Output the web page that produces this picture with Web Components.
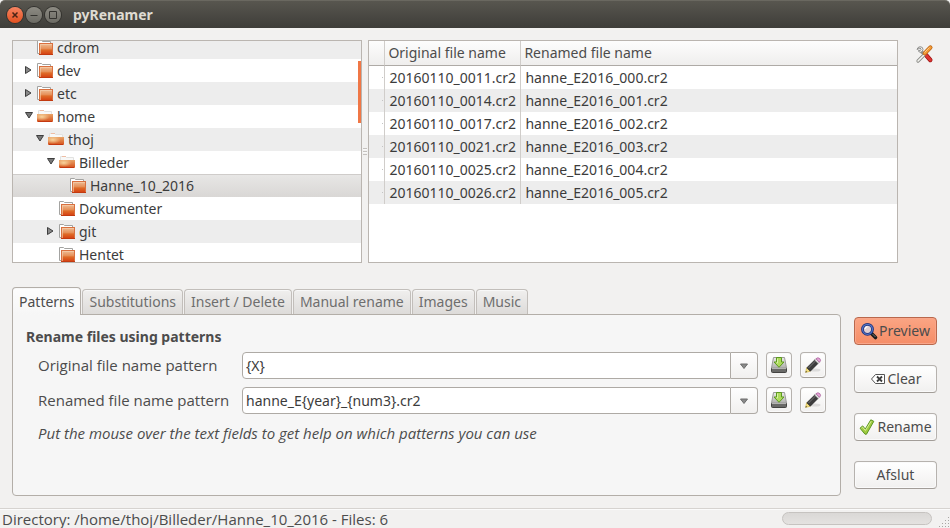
<!DOCTYPE html>
<html lang="da">
<head>
  <meta charset="utf-8">
  <title>pyRenamer</title>
  <style>
    body {
      margin: 0;
      background: #f2f1f0;
      color: #4c4c4c;
      font: 14px/20px "Noto Sans", "Open Sans", sans-serif;
    }
  </style>
</head>
<body>
  <renamer-app></renamer-app>

<script>
(function () {
  // 16x16 drawings used by <app-icon>
  const icons = {
    folder: `
      <linearGradient id="g" x1="0" y1="0" x2="0" y2="1"><stop offset="0" stop-color="#eebb92"/><stop offset=".45" stop-color="#e6915a"/><stop offset=".6" stop-color="#df6c28"/><stop offset="1" stop-color="#d64414"/></linearGradient>
      <path d="M2 13.500H.5V.5h4l1 1h8V3" fill="#fff" stroke="#a3a3a1"/>
      <path d="M2 3h14v12H2z" fill="#d9703f"/>
      <rect x="3" y="4" width="12" height="10" fill="url(#g)"/>
      <path d="M3.500 14V4.500H15" stroke="#f5d2b2" stroke-opacity=".6"/>
      <path d="M2 14.500h14" stroke="#c23a10"/>`,
    'folder-open': `
      <linearGradient id="g" x1="0" y1="0" x2="0" y2="1"><stop offset="0" stop-color="#e9a468"/><stop offset="1" stop-color="#d5501a"/></linearGradient>
      <radialGradient id="l" cx=".3" cy=".35" r=".5"><stop offset="0" stop-color="#f8d49c"/><stop offset="1" stop-color="#f8d49c" stop-opacity="0"/></radialGradient>
      <path d="M1.500 5V1.500h5l1 1h7V5" fill="#f8f8f7" stroke="#e2e2e0"/>
      <path d="M3 1.500h4" stroke="#eebda4"/>
      <path d="M0 5h16v7q0 1-1 1H1q-1 0-1-1z" fill="url(#g)"/>
      <path d="M0 5h16v7q0 1-1 1H1q-1 0-1-1z" fill="url(#l)"/>
      <path d="M1 12.500h14" stroke="#c43810"/>`,
    tools: `
      <path d="M5 5.500l5 4" stroke="#8f8f8c" stroke-width="3"/>
      <path d="M10 9l4.300 5" stroke="#9c1414" stroke-width="4.400" stroke-linecap="round"/>
      <path d="M10 9l4.300 5" stroke="#dd3532" stroke-width="3" stroke-linecap="round"/>
      <path d="M1 3.500Q1.500 1 4 .7q3 0 3 2.800-.2 2.600-2.500 2.800Q2 6 2.600 4.300l1.800.2.800-1.300-1.200-1.200z" fill="#f4f4f2" stroke="#858582" stroke-width=".9"/>
      <path d="M8 9l-6 6" stroke="#888884" stroke-width="3.200" stroke-linecap="round"/>
      <path d="M8 9l-6 6" stroke="#f4f4f0" stroke-width="1.600" stroke-linecap="round"/>
      <path d="M8.800 7.200L14.400 1.600" stroke="#b96314" stroke-width="4.200" stroke-linecap="round"/>
      <path d="M8.800 7.200L14.400 1.600" stroke="#f39a35" stroke-width="2.800" stroke-linecap="round"/>
      <path d="M8.500 6.500L13.500 1.500" stroke="#fbc98b"/>`,
    save: `
      <linearGradient id="g" x1="0" y1="0" x2="0" y2="1"><stop offset="0" stop-color="#ececea"/><stop offset="1" stop-color="#b0b0ae"/></linearGradient>
      <path d="M2.500.5h11l2 10.500H.5z" fill="url(#g)" stroke="#9a9a98"/>
      <path d="M.5 11.500h15v3q0 1-1 1h-13q-1 0-1-1z" fill="#6a6a68" stroke="#444442"/>
      <path d="M1 11.500h14" stroke="#b4b4b2"/>
      <path d="M5.500.5h5v4.500h2.500L8 10.300 3 5h2.500z" fill="#aedb5c" stroke="#5c9a1e"/>
      <path d="M6.500 1.500v4.500H5.500" fill="none" stroke="#d8f2a6"/>`,
    edit: `
      <ellipse cx="10" cy="13" rx="5.500" ry="1.500" fill="#000" fill-opacity=".1"/>
      <path d="M.6 15.400l1-4.600 3.600 3.500z" fill="#f4e082" stroke="#d0b448" stroke-width=".7"/>
      <path d="M.4 15.600l.6-1.600 1 1z" fill="#222"/>
      <path d="M1.800 10.800L9.700 3l3.400 3.400-7.800 7.800z" fill="#3c3c3c" stroke="#1d1d1d" stroke-width=".6"/>
      <path d="M3.500 11l7-7" stroke="#777"/>
      <path d="M9.700 3l1.200-1.200 3.400 3.400-1.200 1.200z" fill="#e4e4e4" stroke="#888" stroke-width=".5"/>
      <path d="M11 1.700q1.900-1.900 3.800-.1 1.700 1.900-.3 3.700z" fill="#e7a6da" stroke="#a05490" stroke-width=".7"/>`,
    find: `
      <path d="M10 10l4.500 4.500" stroke="#1b1b1b" stroke-width="3.600" stroke-linecap="round"/>
      <path d="M11.500 11l3 3" stroke="#777" stroke-width="1"/>
      <circle cx="6.500" cy="6.300" r="5" fill="#d8e2f2" fill-opacity=".75" stroke="#1d2f78" stroke-width="2.800"/>
      <circle cx="6.500" cy="6.300" r="5" fill="none" stroke="#5374c4" stroke-width="1.200"/>
      <path d="M4 5.800Q4.500 4 6.500 3.700" fill="none" stroke="#fff" stroke-width="1.300"/>`,
    clear: `
      <path d="M1.500 8l4-4.500h9v9h-9z" fill="#fff" stroke="#555"/>
      <path d="M7 5.500l5 5M12 5.500l-5 5" stroke="#3c3c3c" stroke-width="1.800"/>`,
    apply: `
      <path d="M1 9.200l2.700-2.300L6.300 10 11.800.8l3 1.500L7.500 15.200H6z" fill="#9fcb3f" stroke="#5c9626" stroke-linejoin="round"/>
      <path d="M2.600 9l1-.8 2.800 3.300 5.800-9.300" fill="none" stroke="#d5ee9a"/>`,
    right: '<path d="M4.500 3.500v7l5.500-3.500z" fill="#888" stroke="#3e3e3e"/>',
    down: '<path d="M4.500 3.500h7L8 9z" fill="#777" stroke="#3e3e3e"/>',
    arrow: '<path d="M4.500 6h7L8 10.500z" fill="#8a8a8a" stroke="#6c6c6c"/>',
    close: '<path d="M5.500 5.500l5 5M10.500 5.500l-5 5" stroke="#4a2416" stroke-width="1.500"/>',
    minimize: '<path d="M4.500 8.500h7" stroke="#34332f"/>',
    maximize: '<path d="M4.500 4.500h7v7h-7z" fill="none" stroke="#34332f"/>'
  }

  // defines an element whose shadow root is cloned from a template
  function define (name, html, setup) {
    const template = document.createElement('template')
    template.innerHTML = html
    window.customElements.define(name, class extends HTMLElement {
      constructor () {
        super()
        this.attachShadow({mode: 'open'})
        this.shadowRoot.appendChild(document.importNode(template.content, true))
      }

      connectedCallback () {
        if (setup) setup.call(this, this.shadowRoot)
      }
    })
  }

  define('app-icon', `<style>
      :host { display: block; flex: none; width: 16px; height: 16px; }
      svg { display: block; width: 100%; height: 100%; overflow: visible; }
    </style>
    <svg viewBox="0 0 16 16" fill="none" aria-hidden="true"></svg>
  `, function (root) {
    root.querySelector('svg').innerHTML = icons[this.getAttribute('name')]
  })

  define('push-button', `<style>
      :host { display: block; }
      button {
        display: flex;
        align-items: center;
        justify-content: center;
        gap: 2px;
        box-sizing: border-box;
        width: 100%;
        height: 28px;
        padding: 0;
        border: 1px solid #b6b2ae;
        border-bottom-color: #a29d98;
        border-radius: 4px;
        background: linear-gradient(#fff, #f1f0ef);
        box-shadow: inset 0 0 0 1px #fafafa;
        color: inherit;
        font: inherit;
        white-space: nowrap;
      }
      :host([square]) button { width: 26px; height: 26px; }
      :host([flat]) button { border: 0; background: none; box-shadow: none; }
      :host([primary]) button {
        border-color: #b9684c;
        background: linear-gradient(#fba584, #f58d67);
        box-shadow: inset 0 0 0 1px #f9a68a;
      }
    </style>
    <button type="button"><slot></slot></button>
  `, function (root) {
    const label = this.getAttribute('label')
    if (label) root.querySelector('button').setAttribute('aria-label', label)
  })

  define('title-bar', `<style>
      :host {
        display: flex;
        align-items: center;
        gap: 3px;
        box-sizing: border-box;
        height: 28px;
        padding: 0 7px;
        border-top: 1px solid #6a6860;
        border-radius: 5px 5px 0 0;
        background: linear-gradient(#58564f, #3e3d39);
      }
      button {
        display: block;
        box-sizing: border-box;
        width: 16px;
        height: 16px;
        padding: 0;
        border: 0;
        border-radius: 50%;
        background: linear-gradient(#8d8b83, #6c6b64);
        box-shadow: 0 0 0 1px #33322e;
      }
      .close { background: linear-gradient(#f78462, #e2501f); }
      h1 {
        margin: 0 0 0 9px;
        color: #dfdbd2;
        font-size: 14px;
        line-height: 20px;
      }
    </style>
    <button class="close" type="button" aria-label="Close"><app-icon name="close"></app-icon></button>
    <button type="button" aria-label="Minimize"><app-icon name="minimize"></app-icon></button>
    <button type="button" aria-label="Maximize"><app-icon name="maximize"></app-icon></button>
    <h1><slot></slot></h1>
  `)

  define('tree-row', `<style>
      :host {
        display: flex;
        align-items: center;
        box-sizing: border-box;
        height: 23px;
        padding-top: 1px;
        padding-left: calc(var(--depth) * 11px);
        color: #3c3c3c;
      }
      :host(:nth-child(odd)) { background: #ededed; }
      :host([aria-selected]) {
        box-shadow: inset 0 1px #cfccca;
        background: linear-gradient(#e8e7e6, #d9d7d5);
      }
      .expander { width: 13px; }
      .expander app-icon { margin-left: -3px; }
      .text { margin-left: 4px; }
    </style>
    <span class="expander"></span>
    <app-icon></app-icon>
    <span class="text"><slot></slot></span>
  `, function (root) {
    const state = this.getAttribute('aria-expanded')
    this.setAttribute('role', 'treeitem')
    this.style.setProperty('--depth', this.getAttribute('aria-level'))
    root.querySelector('app-icon').replaceWith(makeIcon(state === 'true' ? 'folder-open' : 'folder'))
    if (state) root.querySelector('.expander').replaceChildren(makeIcon(state === 'true' ? 'down' : 'right'))
  })

  function makeIcon (name) {
    const icon = document.createElement('app-icon')
    icon.setAttribute('name', name)
    return icon
  }

  define('folder-tree', `<style>
      :host {
        display: block;
        position: relative;
        box-sizing: border-box;
        overflow: hidden;
        border: 1px solid #bab5b0;
        background: #fff;
      }
      /* list is scrolled a little way down */
      .rows { margin-top: -5px; }
      .thumb {
        position: absolute;
        top: 20px;
        right: 0;
        width: 3px;
        height: 62px;
        background: #f07746;
      }
    </style>
    <div class="rows" role="tree" aria-label="Folders"><slot></slot></div>
    <div class="thumb"></div>
  `)

  define('file-list', `<style>
      :host {
        display: block;
        box-sizing: border-box;
        overflow: hidden;
        border: 1px solid #bab5b0;
        background: #fff;
      }
      table { width: 100%; border-collapse: separate; border-spacing: 0; table-layout: fixed; }
      .mark { width: 16px; }
      .original { width: 136px; }
      th, td {
        box-sizing: border-box;
        height: 23px;
        padding: 0 0 0 4px;
        border-right: 1px solid #d0cdca;
        text-align: left;
        white-space: nowrap;
      }
      th {
        height: 25px;
        padding-left: 3px;
        border-bottom: 1px solid #aeaaa6;
        background: linear-gradient(#fdfdfd, #efeeed);
        font-weight: normal;
      }
      th:last-child, td:last-child { border-right: 0; }
      td { color: #3c3c3c; }
      tbody tr:nth-child(even) { background: #ededed; }
      td:first-child::after {
        content: "";
        display: block;
        width: 1px;
        height: 1px;
        margin-left: 9px;
        background: #c4c4c4;
      }
    </style>
    <table>
      <colgroup><col class="mark"><col class="original"><col></colgroup>
      <thead><tr><th></th><th scope="col">Original file name</th><th scope="col">Renamed file name</th></tr></thead>
      <tbody>
        <tr><td></td><td>20160110_0011.cr2</td><td>hanne_E2016_000.cr2</td></tr>
        <tr><td></td><td>20160110_0014.cr2</td><td>hanne_E2016_001.cr2</td></tr>
        <tr><td></td><td>20160110_0017.cr2</td><td>hanne_E2016_002.cr2</td></tr>
        <tr><td></td><td>20160110_0021.cr2</td><td>hanne_E2016_003.cr2</td></tr>
        <tr><td></td><td>20160110_0025.cr2</td><td>hanne_E2016_004.cr2</td></tr>
        <tr><td></td><td>20160110_0026.cr2</td><td>hanne_E2016_005.cr2</td></tr>
      </tbody>
    </table>
  `)

  define('pane-handle', `<style>
      :host { display: flex; align-items: center; justify-content: center; width: 6px; }
      span {
        width: 4px;
        height: 7px;
        background: repeating-linear-gradient(#c4c1be 0 1px, #f9f9f9 1px 2px, transparent 2px 3px);
      }
    </style>
    <span></span>
  `)

  define('pattern-row', `<style>
      :host { display: flex; gap: 8px; }
      label {
        width: 196px;
        font: 15px/27px "Open Sans", sans-serif;
      }
      .combo { display: flex; flex: 1; }
      input, .combo button {
        box-sizing: border-box;
        height: 27px;
        border: 1px solid #aeaaa5;
        font: inherit;
      }
      input {
        flex: 1;
        min-width: 0;
        padding: 0 3px;
        border-radius: 4px 0 0 4px;
        background: #fff;
        color: #3c3c3c;
      }
      .combo button {
        display: flex;
        align-items: center;
        justify-content: center;
        width: 27px;
        padding: 1px 0 0;
        border-left: 0;
        border-radius: 0 4px 4px 0;
        background: linear-gradient(#fefefe, #f1f0ef);
      }
    </style>
    <label for="pattern"><slot></slot></label>
    <div class="combo">
      <input id="pattern" type="text" spellcheck="false">
      <button type="button" aria-label="Saved patterns"><app-icon name="arrow"></app-icon></button>
    </div>
    <push-button square label="Save pattern"><app-icon name="save"></app-icon></push-button>
    <push-button square label="Edit patterns"><app-icon name="edit"></app-icon></push-button>
  `, function (root) {
    root.querySelector('input').value = this.getAttribute('value')
    // text passed to the slot also names the field
    root.querySelector('input').setAttribute('aria-label', this.textContent)
  })

  define('rename-tabs', `<style>
      :host { display: flex; flex-direction: column; }
      .tabs { display: flex; align-items: flex-end; gap: 1px; height: 28px; }
      button {
        box-sizing: border-box;
        height: 26px;
        padding: 0 6px;
        border: 1px solid #c2beba;
        border-bottom-color: #b3aea8;
        border-radius: 4px 4px 0 0;
        background: linear-gradient(#f0efee, #dddbd9);
        box-shadow: inset 0 1px #f8f8f8;
        color: #6e6e6e;
        font: inherit;
        white-space: nowrap;
      }
      button[aria-selected=true] {
        position: relative;
        height: 28px;
        border-color: #b3aea8;
        border-bottom: 0;
        background: linear-gradient(#fdfdfd, #f6f6f6);
        color: #4c4c4c;
      }
      .page {
        flex: 1;
        margin-top: -1px;
        padding: 12px 14px 0 13px;
        border: 1px solid #b3aea8;
        border-radius: 0 4px 4px 4px;
        background: #f6f6f6;
      }
      h2 { margin: 0; font-size: 14px; line-height: 20px; }
      .fields { display: grid; gap: 8px; margin-left: 12px; padding-top: 5px; }
      p { margin: 0; font: italic 15px/22px "Open Sans", sans-serif; }
    </style>
    <div class="tabs" role="tablist">
      <button type="button" role="tab" aria-selected="true">Patterns</button>
      <button type="button" role="tab">Substitutions</button>
      <button type="button" role="tab">Insert / Delete</button>
      <button type="button" role="tab">Manual rename</button>
      <button type="button" role="tab">Images</button>
      <button type="button" role="tab">Music</button>
    </div>
    <div class="page" role="tabpanel">
      <h2>Rename files using patterns</h2>
      <div class="fields">
        <pattern-row value="{X}">Original file name pattern</pattern-row>
        <pattern-row value="hanne_E{year}_{num3}.cr2">Renamed file name pattern</pattern-row>
        <p>Put the mouse over the text fields to get help on which patterns you can use</p>
      </div>
    </div>
  `)

  define('status-bar', `<style>
      :host {
        display: flex;
        align-items: center;
        box-sizing: border-box;
        height: 20px;
        border-top: 1px solid #d6d3d0;
        box-shadow: inset 0 1px #fbfbfb;
        font: 15px/18px "Open Sans", sans-serif;
      }
      .text { flex: 1; padding-left: 2px; line-height: 18px; }
      .progress {
        box-sizing: border-box;
        width: 150px;
        height: 13px;
        margin-right: 6px;
        border: 1px solid #c6c3c0;
        border-radius: 7px;
        background: linear-gradient(#dad8d6, #e4e2e0);
      }
      svg { align-self: flex-end; width: 12px; height: 12px; }
    </style>
    <span class="text" role="status"><slot></slot></span>
    <div class="progress" role="progressbar" aria-label="Progress"></div>
    <svg viewBox="0 0 12 12" fill="#a9a6a3" aria-hidden="true">
      <path d="M10 1h1v1h-1zM7 4h1v1H7zM10 4h1v1h-1zM4 7h1v1H4zM7 7h1v1H7zM10 7h1v1h-1zM1 10h1v1H1zM4 10h1v1H4zM7 10h1v1H7zM10 10h1v1h-1z"/>
    </svg>
  `)

  define('renamer-app', `<style>
      :host { display: flex; flex-direction: column; height: 100vh; }
      main {
        display: grid;
        flex: 1;
        grid-template-rows: minmax(0, 223fr) minmax(0, 209fr);
        gap: 24px;
        min-height: 0;
        padding: 12px;
      }
      .browse, .rename { display: flex; min-height: 0; }
      folder-tree { flex: 350; }
      file-list { flex: 530; }
      .preferences { width: 26px; margin-left: 13px; margin-right: 1px; }
      rename-tabs { flex: 1; min-width: 0; }
      .actions {
        display: grid;
        align-content: start;
        gap: 20px;
        width: 83px;
        margin: 0 1px 0 13px;
        padding-top: 30px;
      }
    </style>
    <title-bar>pyRenamer</title-bar>
    <main>
      <div class="browse">
        <folder-tree>
          <tree-row aria-level="1">cdrom</tree-row>
          <tree-row aria-level="1" aria-expanded="false">dev</tree-row>
          <tree-row aria-level="1" aria-expanded="false">etc</tree-row>
          <tree-row aria-level="1" aria-expanded="true">home</tree-row>
          <tree-row aria-level="2" aria-expanded="true">thoj</tree-row>
          <tree-row aria-level="3" aria-expanded="true">Billeder</tree-row>
          <tree-row aria-level="4" aria-selected="true">Hanne_10_2016</tree-row>
          <tree-row aria-level="3">Dokumenter</tree-row>
          <tree-row aria-level="3" aria-expanded="false">git</tree-row>
          <tree-row aria-level="3">Hentet</tree-row>
        </folder-tree>
        <pane-handle></pane-handle>
        <file-list></file-list>
        <push-button class="preferences" flat label="Preferences"><app-icon name="tools"></app-icon></push-button>
      </div>
      <div class="rename">
        <rename-tabs></rename-tabs>
        <div class="actions">
          <push-button primary><app-icon name="find"></app-icon>Preview</push-button>
          <push-button><app-icon name="clear"></app-icon>Clear</push-button>
          <push-button><app-icon name="apply"></app-icon>Rename</push-button>
          <push-button>Afslut</push-button>
        </div>
      </div>
    </main>
    <status-bar>Directory: /home/thoj/Billeder/Hanne_10_2016 - Files: 6</status-bar>
  `)
})()
</script>
</body>
</html>
